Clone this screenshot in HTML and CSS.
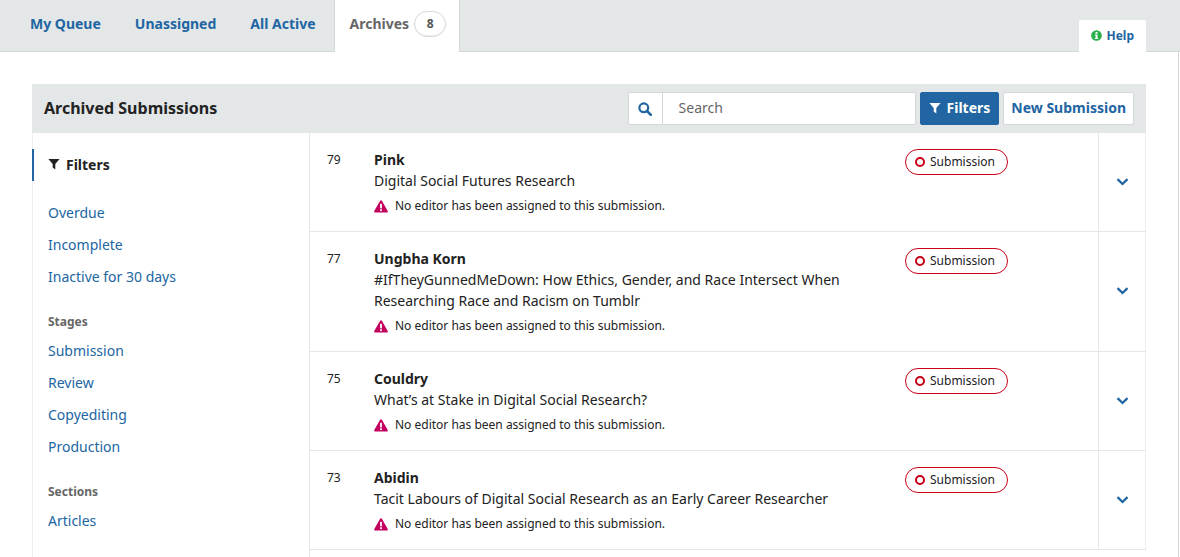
FILE: index.html
```html
<!DOCTYPE html>
<html lang="en">
<head>
    <meta charset="UTF-8">
    <title>Archived Submissions</title>
    <link rel="stylesheet" href="styles.css">
</head>
<body>
    <nav class="tabs">
        <a class="tab" href="#">My Queue</a>
        <a class="tab" href="#">Unassigned</a>
        <a class="tab" href="#">All Active</a>
        <a class="tab tab-current" href="#">Archives <span class="tab-count">8</span></a>
        <a class="help" href="#">
            <svg class="help-icon" viewBox="0 0 12 12"><circle cx="6" cy="6" r="5.8" fill="#28b04a"/><rect x="4.9" y="2.2" width="2.2" height="1.9" fill="#fff"/><path d="M4.2 5h2.9v3.7h.8v1H4.1v-1h.9V6h-.8z" fill="#fff"/></svg>
            Help
        </a>
    </nav>

    <main class="panel">
        <header class="list-header">
            <h1 class="list-title">Archived Submissions</h1>
            <div class="search">
                <span class="search-icon">
                    <svg viewBox="0 0 14 14" width="14" height="14"><circle cx="5.8" cy="5.8" r="4.4" fill="none" stroke="#2165a2" stroke-width="2.2"/><path d="M9 9l3.8 3.8" stroke="#2165a2" stroke-width="2.6" stroke-linecap="round"/></svg>
                </span>
                <span class="search-text">Search</span>
            </div>
            <button class="btn btn-primary">
                <svg class="funnel" viewBox="0 0 12 12"><path d="M.4 1h11.2L7.3 6v5.4L4.7 9.6V6z" fill="#fff"/></svg>
                Filters
            </button>
            <button class="btn">New Submission</button>
        </header>

        <div class="list-body">
            <aside class="filters">
                <div class="filters-head">
                    <svg class="funnel" viewBox="0 0 12 12"><path d="M.4 1h11.2L7.3 6v5.4L4.7 9.6V6z" fill="#222"/></svg>
                    Filters
                </div>
                <ul class="filter-group">
                    <li><a href="#">Overdue</a></li>
                    <li><a href="#">Incomplete</a></li>
                    <li><a href="#">Inactive for 30 days</a></li>
                </ul>
                <h2 class="filter-title">Stages</h2>
                <ul class="filter-group">
                    <li><a href="#">Submission</a></li>
                    <li><a href="#">Review</a></li>
                    <li><a href="#">Copyediting</a></li>
                    <li><a href="#">Production</a></li>
                </ul>
                <h2 class="filter-title">Sections</h2>
                <ul class="filter-group">
                    <li><a href="#">Articles</a></li>
                </ul>
            </aside>

            <section class="items">
                <article class="item">
                    <div class="item-id">79</div>
                    <div class="item-main">
                        <div class="item-author">Pink</div>
                        <div class="item-title">Digital Social Futures Research</div>
                        <div class="item-notice">
                            <svg class="warn" viewBox="0 0 14 13"><path d="M7 .3c.4 0 .7.2.9.5l5.8 10.2c.4.7-.1 1.6-.9 1.6H1.2c-.8 0-1.3-.9-.9-1.6L6.1.8c.2-.3.5-.5.9-.5z" fill="#c4005f"/><rect x="6.1" y="3.8" width="1.8" height="4.6" fill="#fff"/><rect x="6.1" y="9.3" width="1.8" height="1.8" fill="#fff"/></svg>
                            No editor has been assigned to this submission.
                        </div>
                    </div>
                    <div class="item-stage"><span class="stage"><i class="stage-dot"></i>Submission</span></div>
                    <div class="item-toggle"><svg class="chevron" viewBox="0 0 12 8"><path d="M1 1.2L6 6l5-4.8" fill="none" stroke="#2165a2" stroke-width="2.3"/></svg></div>
                </article>
                <article class="item">
                    <div class="item-id">77</div>
                    <div class="item-main">
                        <div class="item-author">Ungbha Korn</div>
                        <div class="item-title">#IfTheyGunnedMeDown: How Ethics, Gender, and Race Intersect When Researching Race and Racism on Tumblr</div>
                        <div class="item-notice">
                            <svg class="warn" viewBox="0 0 14 13"><path d="M7 .3c.4 0 .7.2.9.5l5.8 10.2c.4.7-.1 1.6-.9 1.6H1.2c-.8 0-1.3-.9-.9-1.6L6.1.8c.2-.3.5-.5.9-.5z" fill="#c4005f"/><rect x="6.1" y="3.8" width="1.8" height="4.6" fill="#fff"/><rect x="6.1" y="9.3" width="1.8" height="1.8" fill="#fff"/></svg>
                            No editor has been assigned to this submission.
                        </div>
                    </div>
                    <div class="item-stage"><span class="stage"><i class="stage-dot"></i>Submission</span></div>
                    <div class="item-toggle"><svg class="chevron" viewBox="0 0 12 8"><path d="M1 1.2L6 6l5-4.8" fill="none" stroke="#2165a2" stroke-width="2.3"/></svg></div>
                </article>
                <article class="item">
                    <div class="item-id">75</div>
                    <div class="item-main">
                        <div class="item-author">Couldry</div>
                        <div class="item-title">What’s at Stake in Digital Social Research?</div>
                        <div class="item-notice">
                            <svg class="warn" viewBox="0 0 14 13"><path d="M7 .3c.4 0 .7.2.9.5l5.8 10.2c.4.7-.1 1.6-.9 1.6H1.2c-.8 0-1.3-.9-.9-1.6L6.1.8c.2-.3.5-.5.9-.5z" fill="#c4005f"/><rect x="6.1" y="3.8" width="1.8" height="4.6" fill="#fff"/><rect x="6.1" y="9.3" width="1.8" height="1.8" fill="#fff"/></svg>
                            No editor has been assigned to this submission.
                        </div>
                    </div>
                    <div class="item-stage"><span class="stage"><i class="stage-dot"></i>Submission</span></div>
                    <div class="item-toggle"><svg class="chevron" viewBox="0 0 12 8"><path d="M1 1.2L6 6l5-4.8" fill="none" stroke="#2165a2" stroke-width="2.3"/></svg></div>
                </article>
                <article class="item">
                    <div class="item-id">73</div>
                    <div class="item-main">
                        <div class="item-author">Abidin</div>
                        <div class="item-title">Tacit Labours of Digital Social Research as an Early Career Researcher</div>
                        <div class="item-notice">
                            <svg class="warn" viewBox="0 0 14 13"><path d="M7 .3c.4 0 .7.2.9.5l5.8 10.2c.4.7-.1 1.6-.9 1.6H1.2c-.8 0-1.3-.9-.9-1.6L6.1.8c.2-.3.5-.5.9-.5z" fill="#c4005f"/><rect x="6.1" y="3.8" width="1.8" height="4.6" fill="#fff"/><rect x="6.1" y="9.3" width="1.8" height="1.8" fill="#fff"/></svg>
                            No editor has been assigned to this submission.
                        </div>
                    </div>
                    <div class="item-stage"><span class="stage"><i class="stage-dot"></i>Submission</span></div>
                    <div class="item-toggle"><svg class="chevron" viewBox="0 0 12 8"><path d="M1 1.2L6 6l5-4.8" fill="none" stroke="#2165a2" stroke-width="2.3"/></svg></div>
                </article>
            </section>
        </div>
    </main>
</body>
</html>
```

FILE: styles.css
```css
html, body {
    height: 557px;
    overflow: hidden;
}

body {
    margin: 0;
    background-color: #fff;
    font-family: "Noto Sans", sans-serif;
    font-size: 14px;
    color: #222;
}

a {
    color: #2165a2;
    text-decoration: none;
}

ul {
    list-style: none;
    margin: 0;
    padding: 0;
}

.tabs {
    display: flex;
    height: 51px;
    padding-left: 13px;
    background-color: #e4e7e8;
    border-bottom: 1px solid #d5d8d9;
}

.tab {
    display: flex;
    align-items: center;
    height: 46px;
    padding: 0 17px;
    font-weight: 700;
    font-size: 14px;
}

.tab-current {
    height: 52px;
    margin-left: 1px;
    padding: 0 13px 5px 15px;
    box-sizing: border-box;
    background-color: #fff;
    border-left: 1px solid #d5d8d9;
    border-right: 1px solid #d5d8d9;
    color: #666;
}

.tab-count {
    display: inline-block;
    width: 30px;
    height: 24px;
    margin-left: 5px;
    border: 1px solid #d5d8d9;
    border-radius: 13px;
    background-color: #fff;
    box-shadow: inset 0 -1px 0 #eee;
    font-size: 12px;
    line-height: 24px;
    text-align: center;
    color: #555;
}

.help {
    display: flex;
    align-items: center;
    gap: 4px;
    height: 32px;
    margin: 20px 34px 0 auto;
    padding: 0 12px 2px;
    box-sizing: border-box;
    background-color: #fff;
    border-radius: 2px 2px 0 0;
    font-size: 12px;
    font-weight: 700;
}

.help-icon {
    width: 11px;
    height: 11px;
}

.panel {
    height: 505px;
    margin-right: 1px;
    padding: 32px 32px 0;
    border-right: 1px solid #d5d8d9;
    box-sizing: border-box;
}

.list-header {
    display: flex;
    align-items: center;
    height: 49px;
    padding: 0 12px;
    background-color: #e4e7e8;
}

.list-title {
    margin: -2px auto 0 0;
    font-size: 16px;
    font-weight: 700;
    color: #222;
}

.search {
    display: flex;
    align-items: center;
    width: 286px;
    height: 31px;
    margin-right: 4px;
    background-color: #fff;
    border: 1px solid #d5d8d9;
    border-radius: 2px;
}

.search-icon {
    display: flex;
    align-items: center;
    justify-content: center;
    width: 33px;
    height: 31px;
    border-right: 1px solid #d5d8d9;
}

.search-text {
    padding: 0 0 2px 16px;
    color: #666;
}

.btn {
    display: flex;
    align-items: center;
    height: 33px;
    margin-left: 4px;
    padding: 0 7px 2px;
    background-color: #fff;
    border: 1px solid #d5d8d9;
    border-radius: 2px;
    font-family: inherit;
    font-size: 14px;
    font-weight: 700;
    color: #2165a2;
}

.btn-primary {
    margin-left: 0;
    padding: 0 8px 2px;
    background-color: #2165a2;
    border-color: #2165a2;
    color: #fff;
    gap: 6px;
}

.funnel {
    width: 12px;
    height: 12px;
}

.list-body {
    display: flex;
    align-items: stretch;
    height: 424px;
}

.filters {
    width: 276px;
    flex: none;
    border-left: 1px solid #eee;
    border-right: 1px solid #e4e7e8;
}

.filters-head {
    display: flex;
    align-items: center;
    gap: 6px;
    height: 32px;
    margin: 16px 0 16px -1px;
    padding: 0 0 2px 14px;
    box-sizing: border-box;
    border-left: 2px solid #2165a2;
    font-weight: 700;
}

.filter-group li {
    height: 32px;
    padding-left: 15px;
    line-height: 32px;
}

.filter-title {
    margin: 19px 0 0;
    padding-left: 15px;
    font-size: 12px;
    line-height: 20px;
    font-weight: 700;
    color: #666;
}

.filter-title + .filter-group {
    margin-top: 3px;
}

.items {
    flex: 1;
}

.item {
    display: flex;
    box-sizing: border-box;
    border-bottom: 1px solid #e4e7e8;
}

.item-id {
    width: 47px;
    padding: 19px 0 0 17px;
    font-size: 12px;
    line-height: 16px;
}

.item-main {
    width: 500px;
    padding: 16px 0 15px;
}

.item-author {
    font-weight: 700;
    line-height: 21px;
}

.item-title {
    line-height: 21px;
}

.item-notice {
    display: flex;
    align-items: center;
    gap: 7px;
    margin-top: 5px;
    font-size: 12px;
    line-height: 20px;
}

.warn {
    width: 14px;
    height: 13px;
}

.item-stage {
    flex: 1;
    padding: 16px 0 0 31px;
}

.stage {
    display: inline-flex;
    align-items: center;
    height: 22px;
    padding: 0 12px 2px 9px;
    border: 1px solid #c70016;
    border-radius: 13px;
    font-size: 12px;
}

.stage-dot {
    width: 6px;
    height: 6px;
    margin: 2px 5px 0 0;
    border: 2px solid #c70016;
    border-radius: 50%;
}

.item-toggle {
    display: flex;
    align-items: center;
    justify-content: center;
    width: 46px;
    padding-bottom: 1px;
    border-left: 1px solid #e4e7e8;
    border-right: 1px solid #eee;
}

.chevron {
    width: 13px;
    height: 8px;
}
```
